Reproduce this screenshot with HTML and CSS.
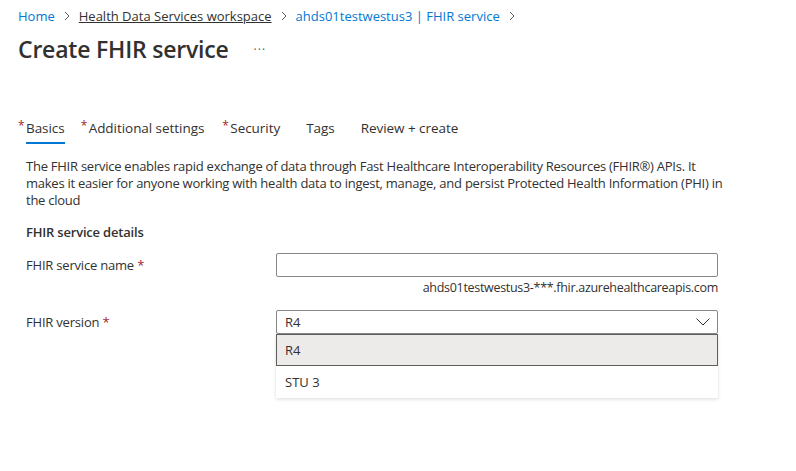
FILE: index.html
```html
<!DOCTYPE html>
<html>
<head>
<meta charset="utf-8">
<link rel="stylesheet" href="styles.css">
</head>
<body>
<div class="page">
  <nav class="crumbs">
    <a class="crumb link">Home</a>
    <span class="sep"><svg width="8" height="10" viewBox="0 0 8 10"><path d="M2 1 L6 5 L2 9" fill="none" stroke="#605e5c" stroke-width="1"/></svg></span>
    <a class="crumb under">Health Data Services workspace</a>
    <span class="sep"><svg width="8" height="10" viewBox="0 0 8 10"><path d="M2 1 L6 5 L2 9" fill="none" stroke="#605e5c" stroke-width="1"/></svg></span>
    <a class="crumb link">ahds01testwestus3 | FHIR service</a>
    <span class="sep"><svg width="8" height="10" viewBox="0 0 8 10"><path d="M2 1 L6 5 L2 9" fill="none" stroke="#605e5c" stroke-width="1"/></svg></span>
  </nav>
  <div class="titlebar">
    <h1 class="title">Create FHIR service</h1>
    <span class="more">···</span>
  </div>
  <div class="tabs">
    <div class="tab active"><span class="req">*</span><span class="tlabel">Basics</span></div>
    <div class="tab"><span class="req">*</span><span class="tlabel">Additional settings</span></div>
    <div class="tab"><span class="req">*</span><span class="tlabel">Security</span></div>
    <div class="tab"><span class="req"></span><span class="tlabel">Tags</span></div>
    <div class="tab"><span class="req"></span><span class="tlabel">Review + create</span></div>
  </div>
  <div class="content">
    <p class="desc">The FHIR service enables rapid exchange of data through Fast Healthcare Interoperability Resources (FHIR®) APIs. It makes it easier for anyone working with health data to ingest, manage, and persist Protected Health Information (PHI) in the cloud</p>
    <h2 class="section">FHIR service details</h2>
    <div class="row">
      <label class="label">FHIR service name <span class="req2">*</span></label>
      <div class="field">
        <div class="input"></div>
        <div class="hint">ahds01testwestus3-***.fhir.azurehealthcareapis.com</div>
      </div>
    </div>
    <div class="row row2">
      <label class="label">FHIR version <span class="req2">*</span></label>
      <div class="field">
        <div class="select">
          <span>R4</span>
          <svg class="chev" width="14" height="8" viewBox="0 0 14 8"><path d="M0.5 0.5 L7 7 L13.5 0.5" fill="none" stroke="#323130" stroke-width="1"/></svg>
          <div class="menu">
            <div class="opt selected">R4</div>
            <div class="opt">STU 3</div>
          </div>
        </div>
      </div>
    </div>
  </div>
</div>
</body>
</html>
```
FILE: styles.css
```css
* { box-sizing: border-box; }
html, body { margin: 0; padding: 0; background: #fff; }
body {
  font-family: "Open Sans", "Noto Sans", sans-serif;
  color: #323130;
  width: 796px;
  height: 471px;
  overflow: hidden;
}
.page { padding: 6px 0 0 18px; }
.crumbs {
  display: flex;
  align-items: center;
  height: 20px;
  font-size: 13px;
}
.crumb { cursor: pointer; }
.link { color: #0078d4; }
.under { color: #323130; text-decoration: underline; }
.sep { display: flex; align-items: center; padding: 0 8px 0 8px; }
.titlebar {
  display: flex;
  align-items: center;
  margin-top: 9px;
  height: 28px;
}
.title {
  margin: 0;
  font-size: 23px;
  font-weight: 600;
  letter-spacing: -0.2px;
}
.more { margin-left: 25px; font-size: 12px; color: #605e5c; letter-spacing: 1px; }
.tabs {
  display: flex;
  margin-top: 53px;
  height: 34px;
  font-size: 13.5px;
  letter-spacing: -0.05px;
}
.tab { display: flex; align-items: flex-start; padding-top: 2px; margin-right: 18px; }
.tab.active { margin-right: 16px; }
.req { color: #a4262c; font-size: 12px; width: 8px; line-height: 16px; }
.tlabel { position: relative; line-height: 20px; }
.tab.active .tlabel::after {
  content: "";
  position: absolute;
  left: 0; right: 0; bottom: -6px;
  height: 2px;
  background: #0078d4;
}
.content { padding-left: 8px; }
.desc {
  margin: 8px 0 0 0;
  width: 706px;
  font-size: 13px;
  line-height: 17px;
  letter-spacing: -0.25px;
}
.section {
  margin: 14px 0 0 0;
  font-size: 13px;
  font-weight: 600;
  line-height: 18px;
  letter-spacing: -0.2px;
}
.row { display: flex; margin-top: 12px; }
.row2 { margin-top: 11px; }
.label {
  width: 250px;
  font-size: 13px;
  line-height: 24px;
  letter-spacing: -0.2px;
}
.req2 { color: #a4262c; }
.field { width: 442px; }
.input {
  height: 24px;
  border: 1px solid #8a8886;
  border-radius: 2px;
}
.hint {
  text-align: right;
  font-size: 12.5px;
  line-height: 22px;
  letter-spacing: -0.3px;
}
.select {
  position: relative;
  height: 24px;
  border: 1px solid #8a8886;
  border-radius: 2px;
  padding-left: 8px;
  font-size: 13px;
  line-height: 22px;
}
.chev { position: absolute; right: 7px; top: 7px; }
.menu {
  position: absolute;
  left: -1px; right: -1px; top: 23px;
  background: #fff;
  box-shadow: 0 1.6px 3.6px rgba(0,0,0,0.13), 0 0.3px 0.9px rgba(0,0,0,0.11);
}
.opt {
  height: 32px;
  line-height: 30px;
  padding-left: 8px;
  font-size: 13px;
  border: 1px solid transparent;
}
.opt.selected { background: #edebe9; border-color: #605e5c; }
```
